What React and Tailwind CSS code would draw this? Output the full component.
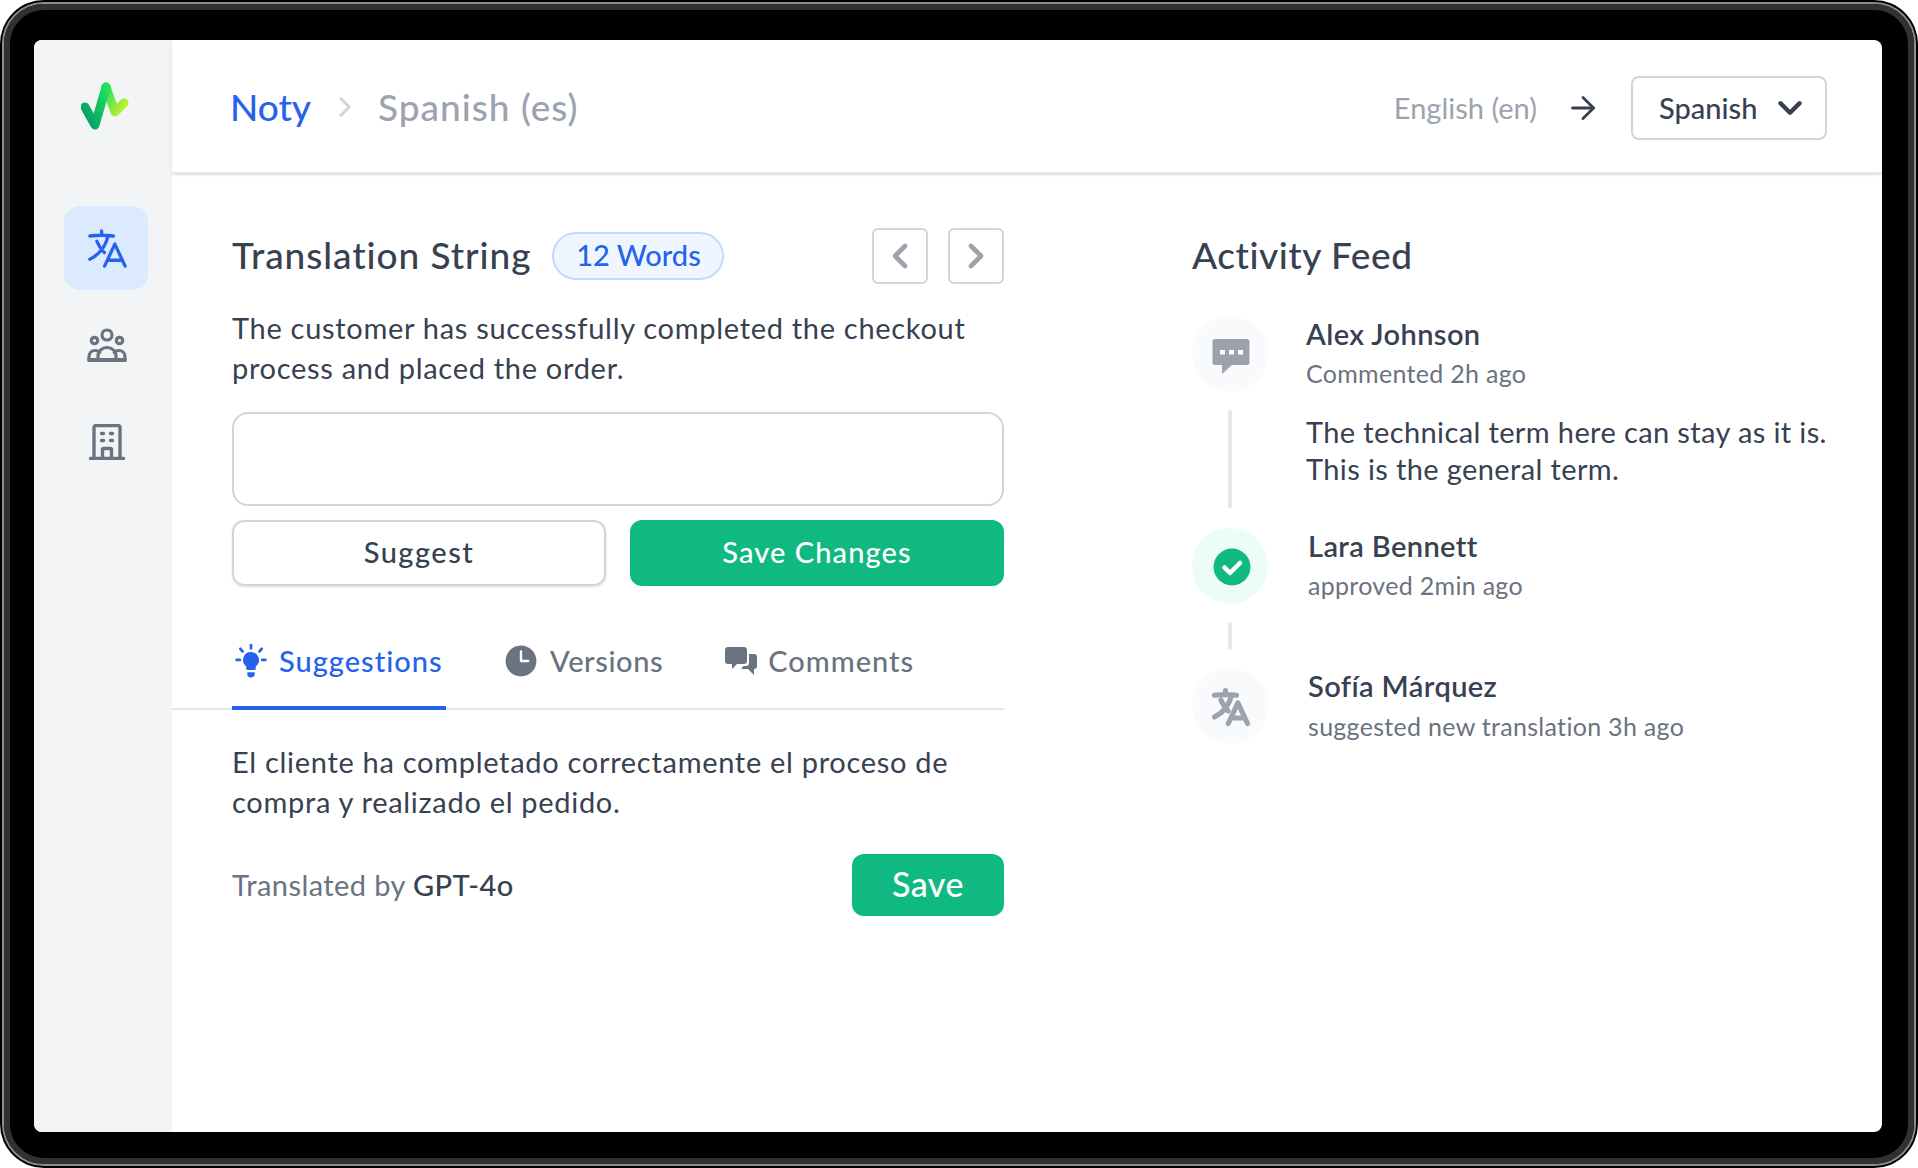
import { ChevronLeft, ChevronRight, ChevronDown, ArrowRight } from "lucide-react";
import { HiClock } from "react-icons/hi2";

function LanguageIcon({ className, strokeWidth = 1.5 }) {
  return (
    <svg viewBox="0 0 24 24" fill="none" stroke="currentColor" strokeWidth={strokeWidth} strokeLinecap="round" strokeLinejoin="round" className={className}>
      <path d="m10.5 21 5.25-11.25L21 21m-9-3h7.5M3 5.621a48.474 48.474 0 0 1 6-.371m0 0c1.12 0 2.233.038 3.334.114M9 5.25V3m3.334 2.364C11.176 10.658 7.69 15.08 3 17.502m9.334-12.138c.896.061 1.785.147 2.666.257m-4.589 8.495a18.023 18.023 0 0 1-3.827-5.802" />
    </svg>
  );
}

function Logo() {
  return (
    <svg viewBox="0 0 48 48" className="h-12 w-12" fill="none" strokeWidth="9" strokeLinecap="round" strokeLinejoin="round">
      <defs>
        <linearGradient id="logoA" x1="0" y1="1" x2="1" y2="0">
          <stop offset="0" stopColor="#059669" />
          <stop offset="1" stopColor="#22e05c" />
        </linearGradient>
        <linearGradient id="logoB" x1="0" y1="0" x2="1" y2="1">
          <stop offset="0" stopColor="#22d95c" />
          <stop offset="1" stopColor="#c8f52f" />
        </linearGradient>
      </defs>
      <path d="M25 5 L34 30 L43 21" stroke="url(#logoB)" />
      <path d="M4 25 L14 43 L25 5" stroke="url(#logoA)" />
    </svg>
  );
}

function GroupIcon({ className }) {
  return (
    <svg viewBox="0 0 40 34" fill="none" stroke="currentColor" strokeWidth="3.200" strokeLinecap="round" strokeLinejoin="round" className={className}>
      <circle cx="20" cy="7" r="5" />
      <circle cx="7.500" cy="12.500" r="3.200" />
      <circle cx="32.500" cy="12.500" r="3.200" />
      <path d="M2 32h36" strokeWidth="3.800" />
      <path d="M2 32v-3c0-4 2.600-6.500 6-6.500 2 0 3.600.6 4.800 1.800" />
      <path d="M38 32v-3c0-4-2.600-6.500-6-6.500-2 0-3.600.6-4.800 1.800" />
      <path d="M11 32v-4c0-5 4-8.500 9-8.500s9 3.500 9 8.500v4" />
    </svg>
  );
}

function BuildingIcon({ className }) {
  return (
    <svg viewBox="0 0 36 36" fill="none" stroke="currentColor" strokeWidth="3.400" strokeLinecap="round" strokeLinejoin="round" className={className}>
      <path d="M1.500 34.500h33M5 34.500V3.500a2 2 0 0 1 2-2h22a2 2 0 0 1 2 2v31" />
      <path d="M12.500 9.500h2M21.500 9.500h2M12.500 16.500h2M21.500 16.500h2" />
      <path d="M13.500 34.500v-9a1 1 0 0 1 1-1h7a1 1 0 0 1 1 1v9" />
    </svg>
  );
}

function BulbIcon({ className }) {
  return (
    <svg viewBox="0 0 30 32" className={className} fill="currentColor">
      <path d="M15 7.500a7.500 7.500 0 0 0-4.500 13.500v2.200a1.300 1.300 0 0 0 1.300 1.300h6.400a1.300 1.300 0 0 0 1.300-1.300V21A7.500 7.500 0 0 0 15 7.500z" />
      <path d="M11.500 26.500h7v1.500a3.500 3.500 0 0 1-7 0z" />
      <path d="M15 1v3M5 4.500l2 2.400M25 4.500l-2 2.400M1.500 15h3M25.500 15h3" stroke="currentColor" strokeWidth="2.600" strokeLinecap="round" fill="none" />
    </svg>
  );
}

function CommentsIcon({ className }) {
  return (
    <svg viewBox="0 0 32 30" className={className} fill="currentColor">
      <path d="M3 1h16a3 3 0 0 1 3 3v11a3 3 0 0 1-3 3h-7l-5 5v-5H3a3 3 0 0 1-3-3V4a3 3 0 0 1 3-3z" />
      <path d="M24 8h5a3 3 0 0 1 3 3v9a3 3 0 0 1-3 3v6l-6-6h-7l2.500-3H21a3 3 0 0 0 3-3z" />
    </svg>
  );
}

function ChatDotsIcon({ className }) {
  return (
    <svg viewBox="0 0 38 38" className={className}>
      <path fill="#9ca3af" d="M3 1h32a2.500 2.500 0 0 1 2.500 2.500v21a2.500 2.500 0 0 1-2.500 2.500H20L10 36v-9H3a2.500 2.500 0 0 1-2.500-2.500v-21A2.500 2.500 0 0 1 3 1z" />
      <path fill="#fff" d="M8 12h5v4.500H8zM17 12h5v4.500h-5zM26 12h5v4.500h-5z" />
    </svg>
  );
}

function CheckBadge({ className }) {
  return (
    <svg viewBox="0 0 38 38" className={className}>
      <circle cx="19" cy="19" r="18.500" fill="#10b981" />
      <path d="M11.500 19.500l5.500 5.500 10-10" fill="none" stroke="#fff" strokeWidth="4.500" strokeLinecap="round" strokeLinejoin="round" />
    </svg>
  );
}

export default function App() {
  return (
    <div className="h-[1168px] w-[1918px] rounded-[44px] bg-black p-[2px] font-[Lato,sans-serif] text-[#374151]">
      <div className="h-full rounded-[42px] border-[2px] border-[#8c8c8c]">
        <div className="h-full rounded-[40px] border-[6px] border-[#2f3135] bg-black pb-[26px] pl-[24px] pr-[26px] pt-[30px]">
          <div className="flex h-full overflow-hidden rounded-[8px] bg-white">
            <aside className="flex w-[138px] shrink-0 flex-col items-center bg-[#f3f4f6] pl-[6px] pt-[42px]">
              <div className="-ml-[2px]">
                <Logo />
              </div>
              <div className="mt-[76px] flex h-[84px] w-[84px] items-center justify-center rounded-[16px] bg-[#dbeafe] pl-[2px] text-[#2563eb]">
                <LanguageIcon className="h-[47px] w-[47px]" strokeWidth={1.700} />
              </div>
              <div className="mt-[38px] pl-[2px] text-[#6b7280]">
                <GroupIcon className="h-[34px] w-[40px]" />
              </div>
              <div className="mt-[62px] pl-[2px] text-[#6b7280]">
                <BuildingIcon className="h-[36px] w-[36px]" />
              </div>
            </aside>

            <main className="flex min-w-0 flex-1 flex-col">
              <header className="flex h-[134px] shrink-0 items-center justify-between border-b-2 border-[#e5e7eb] pl-[58px] pr-[55px] pt-[2px] shadow-sm">
                <div className="flex items-center text-[37px] font-medium">
                  <span className="text-[#2563eb]">Noty</span>
                  <ChevronRight className="ml-[17px] mr-[16px] h-[34px] w-[34px] text-[#d1d5db]" strokeWidth={2} />
                  <span className="tracking-[1px] text-[#9ca3af]">Spanish (es)</span>
                </div>
                <div className="mt-[2px] flex items-center">
                  <span className="text-[29px] text-[#9ca3af]">English (en)</span>
                  <ArrowRight className="ml-[28px] mr-[30px] h-[36px] w-[36px]" strokeWidth={1.900} />
                  <button className="flex h-[64px] w-[196px] items-center justify-between rounded-[8px] border-2 border-[#d1d5db] pl-[26px] pr-[16px] text-[29px] font-medium">
                    Spanish
                    <ChevronDown className="h-[38px] w-[38px]" strokeWidth={2.800} />
                  </button>
                </div>
              </header>

              <div className="flex min-h-0 flex-1">
                <section className="w-[832px] shrink-0 pt-[54px]">
                  <div className="pl-[60px]">
                    <div className="flex h-[56px] items-center justify-between">
                      <div className="flex items-center">
                        <h2 className="pb-[2px] text-[37px] font-medium tracking-[0.95px]">Translation String</h2>
                        <span className="ml-[21px] flex h-[48px] w-[172px] items-center justify-center rounded-full border-2 border-[#bfdbfe] bg-[#eff6ff] pb-[2px] text-[29px] font-medium text-[#2563eb]">
                          12 Words
                        </span>
                      </div>
                      <div className="flex gap-[20px]">
                        <button className="flex h-[56px] w-[56px] items-center justify-center rounded-[6px] border-2 border-[#d1d5db] text-[#9ca3af]">
                          <ChevronLeft className="h-[40px] w-[40px]" strokeWidth={2.800} />
                        </button>
                        <button className="flex h-[56px] w-[56px] items-center justify-center rounded-[6px] border-2 border-[#d1d5db] text-[#9ca3af]">
                          <ChevronRight className="h-[40px] w-[40px]" strokeWidth={2.800} />
                        </button>
                      </div>
                    </div>
                    <p className="mt-[24px] text-[29px] leading-[40px] tracking-[0.7px]">
                      The customer has successfully completed the checkout
                      <br />
                      process and placed the order.
                    </p>
                    <div className="mt-[24px] h-[94px] rounded-[16px] border-2 border-[#d1d5db]" />
                    <div className="mt-[14px] flex gap-[24px]">
                      <button className="h-[66px] w-[374px] rounded-[12px] border-2 border-[#d1d5db] pb-[2px] text-[29px] font-medium tracking-[1.5px] shadow-sm">Suggest</button>
                      <button className="h-[66px] w-[374px] rounded-[12px] bg-[#10b981] pb-[2px] text-[29px] font-medium tracking-[1.1px] text-white">Save Changes</button>
                    </div>
                  </div>

                  <div className="mt-[30px] flex h-[94px] border-b-2 border-[#e5e7eb] pl-[60px] text-[29px] font-medium text-[#6b7280]">
                    <div className="flex h-[94px] w-[214px] items-center gap-[12px] border-b-4 border-[#2563eb] pl-[3px] tracking-[1px] text-[#2563eb]">
                      <BulbIcon className="h-[34px] w-[32px]" />
                      Suggestions
                    </div>
                    <div className="ml-[56px] flex h-[90px] items-center gap-[10px] tracking-[0.6px]">
                      <HiClock size={38} />
                      Versions
                    </div>
                    <div className="ml-[62px] flex h-[90px] items-center gap-[11px] tracking-[1px]">
                      <CommentsIcon className="h-[30px] w-[32px]" />
                      Comments
                    </div>
                  </div>

                  <div className="pl-[60px]">
                    <p className="mt-[32px] text-[29px] leading-[40px] tracking-[0.7px]">
                      El cliente ha completado correctamente el proceso de
                      <br />
                      compra y realizado el pedido.
                    </p>
                    <div className="mt-[32px] flex h-[62px] items-center justify-between">
                      <p className="text-[29px] tracking-[0.4px] text-[#6b7280]">
                        Translated by <span className="font-medium text-[#374151]">GPT-4o</span>
                      </p>
                      <button className="h-[62px] w-[152px] rounded-[12px] bg-[#10b981] pb-[4px] text-[34px] font-medium tracking-[0.5px] text-white">Save</button>
                    </div>
                  </div>
                </section>

                <section className="ml-[188px] flex-1 pt-[54px]">
                  <div className="flex h-[56px] items-center">
                    <h2 className="pb-[2px] text-[37px] font-medium tracking-[0.55px]">Activity Feed</h2>
                  </div>

                  <div className="mt-[32px] flex">
                    <div className="flex w-[76px] shrink-0 flex-col items-center">
                      <div className="flex h-[76px] w-[76px] items-center justify-center rounded-full bg-[#f9fafb] pl-[2px] pt-[5px]">
                        <ChatDotsIcon className="h-[38px] w-[38px]" />
                      </div>
                      <div className="mt-[18px] h-[98px] w-[4px] rounded-full bg-[#e5e7eb]" />
                    </div>
                    <div className="ml-[38px]">
                      <p className="text-[29px] font-semibold leading-[36px] tracking-[0.4px]">Alex Johnson</p>
                      <p className="mt-[5px] text-[25px] leading-[32px] tracking-[0.3px] text-[#6b7280]">Commented 2h ago</p>
                      <p className="mt-[24px] text-[29px] leading-[37px] tracking-[0.38px]">
                        The technical term here can stay as it is.
                        <br />
                        This is the general term.
                      </p>
                    </div>
                  </div>

                  <div className="mt-[20px] flex">
                    <div className="flex w-[76px] shrink-0 flex-col items-center">
                      <div className="flex h-[76px] w-[76px] items-center justify-center rounded-full bg-[#ecfdf5] pl-[3px] pt-[1px]">
                        <CheckBadge className="h-[38px] w-[38px]" />
                      </div>
                      <div className="mt-[18px] h-[28px] w-[4px] rounded-full bg-[#e5e7eb]" />
                    </div>
                    <div className="ml-[40px]">
                      <p className="text-[29px] font-semibold leading-[36px] tracking-[0.4px]">Lara Bennett</p>
                      <p className="mt-[5px] text-[25px] leading-[32px] tracking-[0.3px] text-[#6b7280]">approved 2min ago</p>
                    </div>
                  </div>

                  <div className="mt-[18px] flex">
                    <div className="flex h-[76px] w-[76px] shrink-0 items-center justify-center rounded-full bg-[#f9fafb] pl-[2px] pt-[2px] text-[#9ca3af]">
                      <LanguageIcon className="h-[44px] w-[44px]" strokeWidth={2.800} />
                    </div>
                    <div className="ml-[40px]">
                      <p className="text-[29px] font-semibold leading-[36px] tracking-[0.4px]">Sofía Márquez</p>
                      <p className="mt-[6px] text-[25px] leading-[32px] tracking-[0.3px] text-[#6b7280]">suggested new translation 3h ago</p>
                    </div>
                  </div>
                </section>
              </div>
            </main>
          </div>
        </div>
      </div>
    </div>
  );
}
